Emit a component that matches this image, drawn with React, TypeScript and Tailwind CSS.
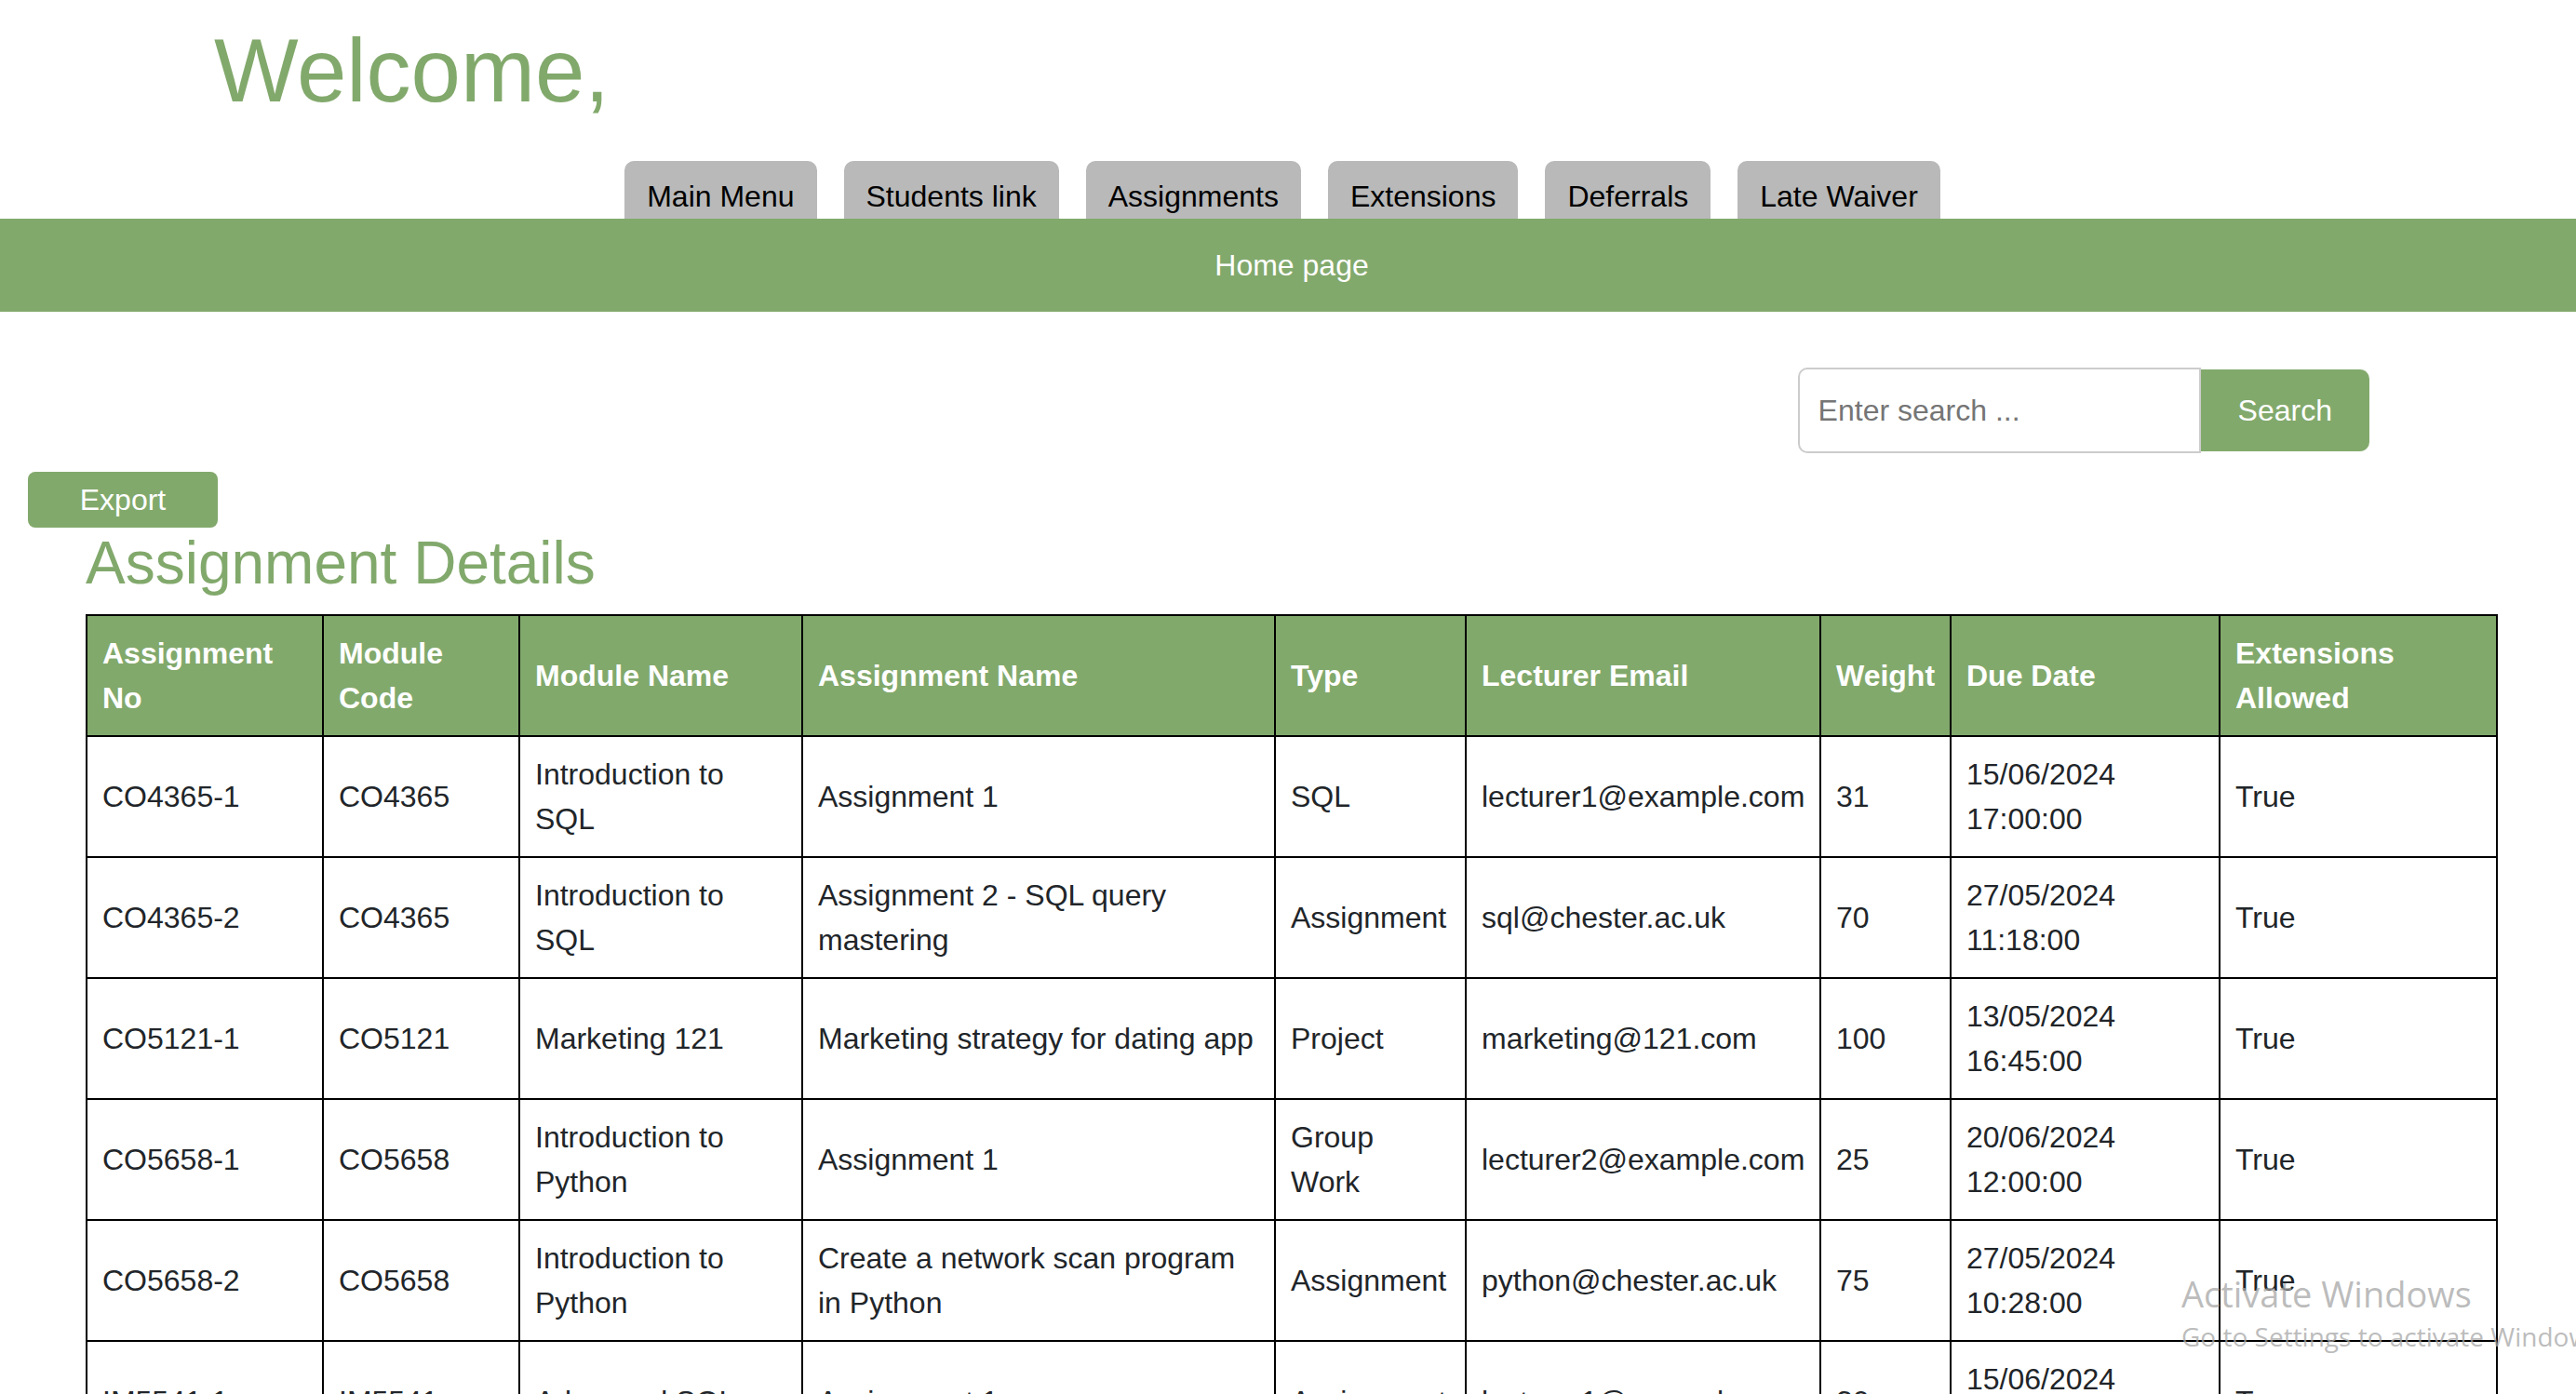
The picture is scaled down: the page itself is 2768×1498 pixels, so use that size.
const tabs = ["Main Menu", "Students link", "Assignments", "Extensions", "Deferrals", "Late Waiver"];

const columns = [
  { label: "Assignment No", width: "w-[254px]" },
  { label: "Module Code", width: "w-[211px]" },
  { label: "Module Name", width: "w-[304px]" },
  { label: "Assignment Name", width: "w-[508px]" },
  { label: "Type", width: "w-[205px]" },
  { label: "Lecturer Email", width: "w-[381px]" },
  { label: "Weight", width: "w-[140px]" },
  { label: "Due Date", width: "w-[289px]" },
  { label: "Extensions Allowed", width: "w-[298px]" },
];

const rows = [
  ["CO4365-1", "CO4365", "Introduction to SQL", "Assignment 1", "SQL", "lecturer1@example.com", "31", "15/06/2024 17:00:00", "True"],
  ["CO4365-2", "CO4365", "Introduction to SQL", "Assignment 2 - SQL query mastering", "Assignment", "sql@chester.ac.uk", "70", "27/05/2024 11:18:00", "True"],
  ["CO5121-1", "CO5121", "Marketing 121", "Marketing strategy for dating app", "Project", "marketing@121.com", "100", "13/05/2024 16:45:00", "True"],
  ["CO5658-1", "CO5658", "Introduction to Python", "Assignment 1", "Group Work", "lecturer2@example.com", "25", "20/06/2024 12:00:00", "True"],
  ["CO5658-2", "CO5658", "Introduction to Python", "Create a network scan program in Python", "Assignment", "python@chester.ac.uk", "75", "27/05/2024 10:28:00", "True"],
  ["IM5541-1", "IM5541", "Advanced SQL", "Assignment 1", "Assignment", "lecturer1@example.com", "30", "15/06/2024 17:00:00", "True"],
];

function Header() {
  return (
    <header>
      <h1 className="px-[230px] pt-[18px] text-[96px] leading-[115px] text-[#82a96c]">Welcome,</h1>
      <nav aria-label="Main" className="mt-10 flex justify-center gap-[29px] pr-3">
        {tabs.map((tab) => (
          <a key={tab} href="#" className="rounded-t-[10px] bg-[#b9b9b9] px-6 pt-[14px] text-black">
            {tab}
          </a>
        ))}
      </nav>
      <div className="bg-[#82a96c] py-[26px] pl-2 text-center text-white">
        <a href="#">Home page</a>
      </div>
    </header>
  );
}

function SearchForm() {
  return (
    <form className="mt-[60px] mr-[222px] flex items-center justify-end" onSubmit={(e) => e.preventDefault()}>
      <input
        type="text"
        aria-label="Search"
        placeholder="Enter search ..."
        className="h-[92px] w-[433px] rounded-l-[10px] border-2 border-[#cccccc] px-5 placeholder:text-[#757575]"
      />
      <button type="submit" className="h-[88px] rounded-r-[10px] bg-[#82a96c] px-10 text-white">
        Search
      </button>
    </form>
  );
}

function AssignmentTable() {
  return (
    <section className="pr-[84px] pl-[92px]">
      <h2 className="mb-4 text-[64px] leading-[77px] text-[#82a96c]">Assignment Details</h2>
      <table className="w-full table-fixed border-collapse text-left">
        <thead>
          <tr className="bg-[#82a96c] text-white">
            {columns.map((c) => (
              <th key={c.label} scope="col" className={`border-2 border-black p-4 font-bold ${c.width}`}>
                {c.label}
              </th>
            ))}
          </tr>
        </thead>
        <tbody>
          {rows.map((row) => (
            <tr key={row[0]} className="h-[130px]">
              {row.map((cell, i) => (
                <td key={i} className="border-2 border-black p-4">
                  {cell}
                </td>
              ))}
            </tr>
          ))}
        </tbody>
      </table>
    </section>
  );
}

export default function App() {
  return (
    <div className="relative h-screen overflow-hidden bg-white font-['Liberation_Sans',Arial,sans-serif] text-[32px] leading-[48px] text-[#212529]">
      <Header />
      <main>
        <SearchForm />
        <button type="button" className="mt-5 ml-[30px] block h-[60px] w-[204px] rounded-lg bg-[#82a96c] text-white">
          Export
        </button>
        <AssignmentTable />
      </main>
      <aside className="pointer-events-none absolute right-0 bottom-[42px] w-[424px] font-['Open_Sans','Noto_Sans',sans-serif] whitespace-nowrap text-[#a6a6a6]/75">
        <p className="text-[38px] leading-[52px]">Activate Windows</p>
        <p className="text-[28px] leading-[40px]">Go to Settings to activate Windows.</p>
      </aside>
    </div>
  );
}
